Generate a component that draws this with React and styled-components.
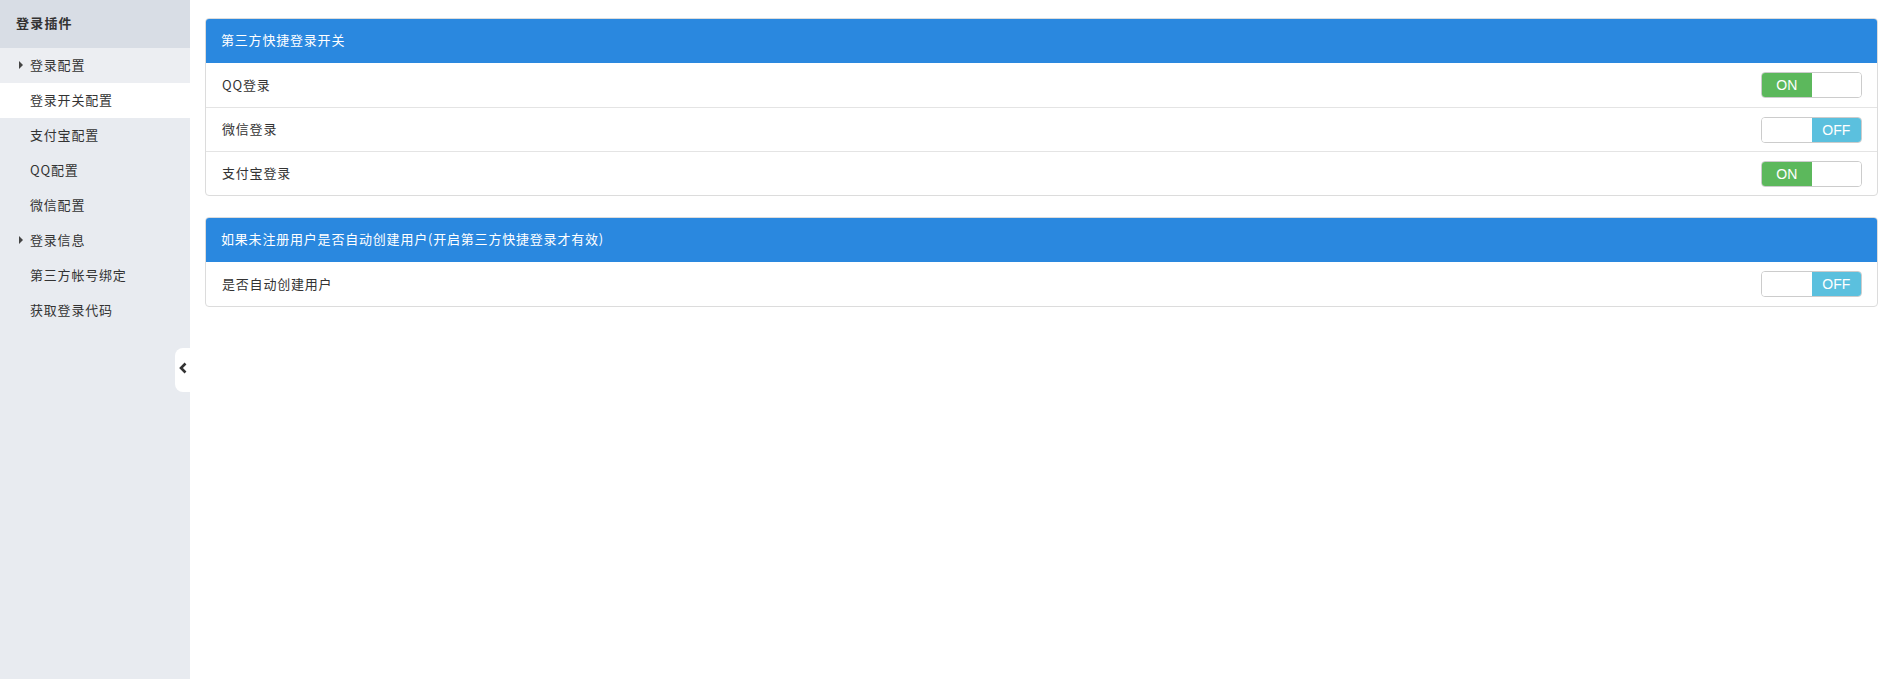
import React from "react";
import styled, { createGlobalStyle } from "styled-components";

const Global = createGlobalStyle`
  html, body { margin: 0; padding: 0; background: #fff; }
  body { font-family: "Noto Sans CJK SC", "Liberation Sans", sans-serif; font-size: 13px; color: #333; }
  * { box-sizing: border-box; }
`;

const Layout = styled.div`
  display: flex;
  min-height: 100vh;
`;

const Sidebar = styled.aside`
  position: relative;
  width: 190px;
  flex: 0 0 190px;
  background: #e8ebf0;
`;

const SideTitle = styled.div`
  height: 48px;
  display: flex;
  align-items: center;
  padding: 0 0 4px 16px;
  background: #d8dde5;
  font-weight: bold;
  font-size: 13px;
  letter-spacing: 1.2px;
  color: #333;
`;

const SideItem = styled.div`
  height: 35px;
  display: flex;
  align-items: center;
  padding: 0 0 3px ${(p) => (p.$group ? "19px" : "30px")};
  background: ${(p) => (p.$active ? "#fff" : p.$group === "light" ? "#eceef2" : "transparent")};
  color: #333;
  letter-spacing: 0.8px;
  font-size: 13px;
`;

const Caret = styled.span`
  display: inline-block;
  width: 0;
  height: 0;
  border-top: 4px solid transparent;
  border-bottom: 4px solid transparent;
  border-left: 4px solid #444;
  margin: 2px 7px 0 0;
`;

const CollapseTab = styled.div`
  position: absolute;
  right: 0;
  top: 348px;
  width: 15px;
  height: 44px;
  background: #fff;
  border-radius: 8px 0 0 8px;
  display: flex;
  align-items: center;
  justify-content: center;
  padding-bottom: 4px;
  color: #333;
`;

const Main = styled.main`
  flex: 1;
  padding: 18px 19px 0 15px;
`;

const Panel = styled.section`
  border: 1px solid #dcdcdc;
  border-radius: 4px;
  margin-bottom: 21px;
  background: #fff;
  overflow: hidden;
`;

const PanelHead = styled.div`
  height: 45px;
  display: flex;
  align-items: center;
  padding: 0 16px 2px;
  background: #2a88df;
  color: #fff;
  font-size: 13px;
  letter-spacing: 0.8px;
  margin: -1px -1px 0;
  border-radius: 4px 4px 0 0;
`;

const Row = styled.div`
  height: 44px;
  display: flex;
  align-items: center;
  justify-content: space-between;
  padding: 0 15px 0 16px;
  border-top: ${(p) => (p.$first ? "none" : "1px solid #e4e4e4")};
  font-size: 13px;
  letter-spacing: 0.8px;
  color: #333;
`;

const Label = styled.span`
  padding-bottom: 2px;
`;

const Switch = styled.div`
  width: 101px;
  height: 26px;
  border: 1px solid #ccc;
  border-radius: 4px;
  display: flex;
  overflow: hidden;
  font-family: "Liberation Sans", Arial, sans-serif;
  font-size: 14px;
  letter-spacing: 0;
`;

const Half = styled.div`
  flex: 1;
  display: flex;
  align-items: center;
  justify-content: center;
  color: #fff;
  background: ${(p) => p.$color || "#fff"};
`;

function Toggle({ on }) {
  return (
    <Switch>
      {on ? (
        <>
          <Half $color="#5cb85c">ON</Half>
          <Half />
        </>
      ) : (
        <>
          <Half />
          <Half $color="#5bc0de">OFF</Half>
        </>
      )}
    </Switch>
  );
}

const menu = [
  { label: "登录配置", group: "light" },
  { label: "登录开关配置", active: true },
  { label: "支付宝配置" },
  { label: "QQ配置" },
  { label: "微信配置" },
  { label: "登录信息", group: "plain" },
  { label: "第三方帐号绑定" },
  { label: "获取登录代码" },
];

export default function App() {
  return (
    <Layout>
      <Global />
      <Sidebar>
        <SideTitle>登录插件</SideTitle>
        {menu.map((m) => (
          <SideItem key={m.label} $group={m.group} $active={m.active}>
            {m.group && <Caret />}
            {m.label}
          </SideItem>
        ))}
        <CollapseTab>
          <svg width="10" height="12" viewBox="0 0 10 12">
            <path d="M7.5 1.5 L3 6 L7.5 10.5" fill="none" stroke="#333" strokeWidth="2.6" />
          </svg>
        </CollapseTab>
      </Sidebar>
      <Main>
        <Panel>
          <PanelHead>第三方快捷登录开关</PanelHead>
          <Row $first><Label>QQ登录</Label><Toggle on /></Row>
          <Row><Label>微信登录</Label><Toggle /></Row>
          <Row><Label>支付宝登录</Label><Toggle on /></Row>
        </Panel>
        <Panel>
          <PanelHead>如果未注册用户是否自动创建用户(开启第三方快捷登录才有效)</PanelHead>
          <Row $first><Label>是否自动创建用户</Label><Toggle /></Row>
        </Panel>
      </Main>
    </Layout>
  );
}
